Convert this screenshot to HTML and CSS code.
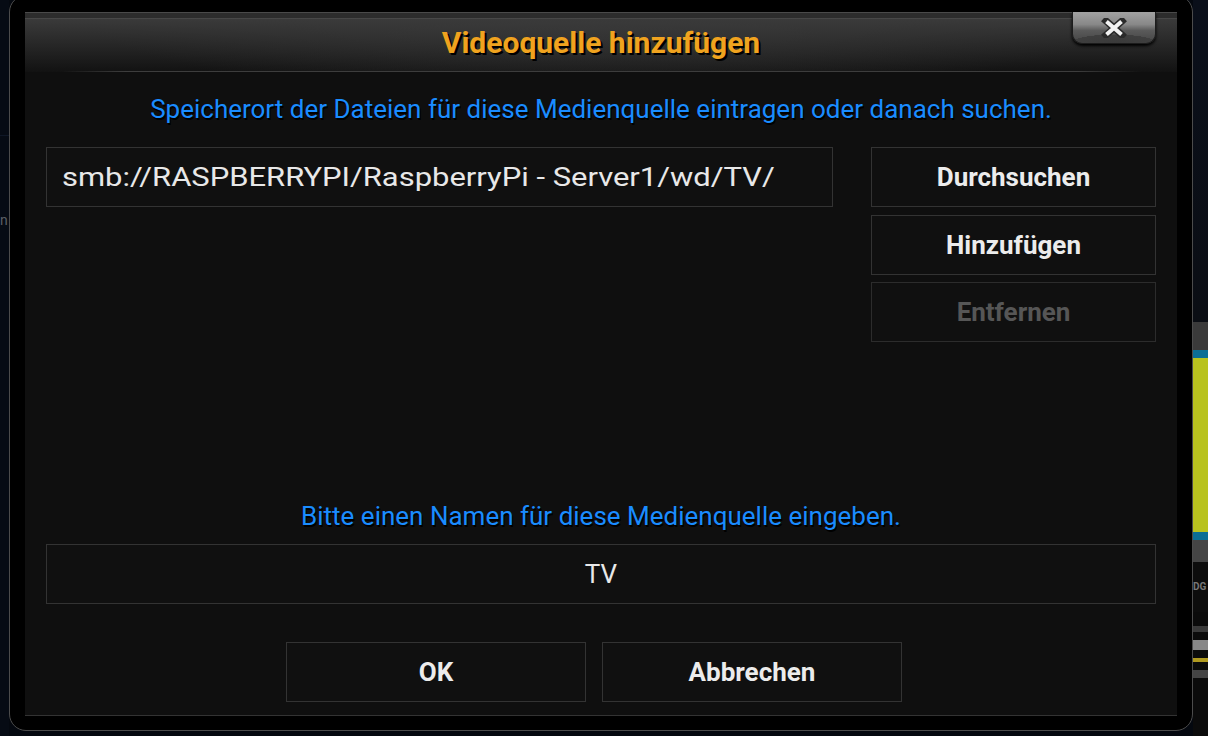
FILE: index.html
```html
<!DOCTYPE html>
<html lang="de">
<head>
<meta charset="utf-8">
<title>Videoquelle hinzufügen</title>
<link rel="stylesheet" href="styles.css">
</head>
<body>
<div class="screen">
  <div class="side side-left">
    <div class="bg-line"></div>
    <span class="bg-text">n</span>
  </div>
  <div class="frame">
    <div class="panel">
      <header class="head">
        <h1 class="title">Videoquelle hinzufügen</h1>
        <div class="head-rule"></div>
        <div class="close" aria-label="Schließen">
          <svg width="26" height="20" viewBox="0 0 26 20">
            <path d="M5 3 L21 17 M21 3 L5 17" stroke="#2a2a2a" stroke-width="7" stroke-linecap="square" fill="none"/>
            <path d="M5.5 3.5 L20.5 16.5 M20.5 3.5 L5.5 16.5" stroke="#f2f2f2" stroke-width="4" stroke-linecap="butt" fill="none"/>
          </svg>
        </div>
      </header>
      <p class="hint hint-top">Speicherort der Dateien für diese Medienquelle eintragen oder danach suchen.</p>
      <div class="row">
        <div class="field field-path"><span class="path-text">smb://RASPBERRYPI/RaspberryPi - Server1/wd/TV/</span></div>
        <div class="btn-col">
          <div class="btn">Durchsuchen</div>
          <div class="btn">Hinzufügen</div>
          <div class="btn btn-disabled">Entfernen</div>
        </div>
      </div>
      <p class="hint hint-name">Bitte einen Namen für diese Medienquelle eingeben.</p>
      <div class="field field-name">TV</div>
      <div class="actions">
        <div class="btn btn-action">OK</div>
        <div class="btn btn-action">Abbrechen</div>
      </div>
    </div>
  </div>
  <div class="side side-right">
    <div class="r-dark"></div>
    <div class="r-gray"></div>
    <div class="r-logo"></div>
    <div class="r-gray2"></div>
    <div class="r-text">DG</div>
    <div class="r-stripes">
      <div class="r-s1"></div>
      <div class="r-s2"></div>
      <div class="r-s3"></div>
      <div class="r-s4"></div>
    </div>
  </div>
</div>
</body>
</html>
```
FILE: styles.css
```css
html, body {
  margin: 0;
  padding: 0;
}
body {
  width: 1208px;
  height: 736px;
  overflow: hidden;
  background: #04080f;
  font-family: Roboto, "Noto Sans", "Liberation Sans", sans-serif;
}
.screen {
  display: flex;
  height: 736px;
  overflow: hidden;
}
.side {
  flex: none;
  display: flex;
  flex-direction: column;
}
.side-left {
  width: 9px;
  background: #060b14;
  overflow: hidden;
}
.bg-line {
  height: 135px;
  border-bottom: 1px solid #0f1726;
}
.bg-text {
  margin-top: 76px;
  color: #5a5f66;
  font-size: 14px;
  line-height: 16px;
}
.frame {
  flex: none;
  box-sizing: border-box;
  width: 1184px;
  height: 736px;
  margin-top: -5px;
  padding: 16px 0 0 15px;
  background: #000;
  border: 1px solid #4c4c4c;
  border-radius: 17px;
}
.panel {
  position: relative;
  box-sizing: border-box;
  width: 1152px;
  height: 704px;
  padding: 0 21px;
  background: #0f0f0f;
  border-bottom: 1px solid #333;
  display: flex;
  flex-direction: column;
}
.head {
  height: 60px;
  margin: 0 -21px;
  display: flex;
  flex-direction: column;
  background:
    linear-gradient(180deg, #4a4a4a 0, #4a4a4a 1px, #2c2c2c 1px, #2c2c2c 6px, #555 6px, #3a3a3a 7px, rgba(0,0,0,0) 60px),
    radial-gradient(ellipse 520px 90px at 50% 0, #303030 0%, #1e1e1e 60%, #121212 100%);
}
.title {
  flex: 1;
  margin: 0;
  display: flex;
  align-items: center;
  justify-content: center;
  padding-top: 2px;
  color: #f0a31f;
  font-size: 30px;
  font-weight: 700;
  text-shadow: 2px 2px 0 #000;
}
.head-rule {
  height: 1px;
  margin: 0 36px 0 36px;
  background: linear-gradient(90deg, rgba(70,70,70,0) 0, #3d3d3d 6%, #3d3d3d 94%, rgba(70,70,70,0) 100%);
}
.close {
  position: absolute;
  top: 0;
  left: 1047px;
  box-sizing: border-box;
  width: 84px;
  height: 32px;
  display: flex;
  align-items: center;
  justify-content: center;
  border: 1px solid #1c1c1c;
  border-top: none;
  border-radius: 0 0 10px 10px;
  background:
    radial-gradient(ellipse 70px 14px at 50% 100%, #3a3a3a 0%, #3f3f3f 60%, rgba(0,0,0,0) 61%),
    linear-gradient(180deg, #a2a2a2 0%, #888 40%, #5a5a5a 60%, #444 100%);
  box-shadow: 0 2px 3px #000;
}
.hint {
  margin: 0;
  text-align: center;
  color: #1a8cff;
  font-size: 26px;
  line-height: 30px;
  text-shadow: 1px 2px 0 #000;
}
.hint-top {
  margin-top: 22px;
}
.row {
  display: flex;
  gap: 38px;
  margin-top: 23px;
}
.field {
  box-sizing: border-box;
  height: 60px;
  display: flex;
  align-items: center;
  background: #101010;
  border: 1px solid #333;
  color: #e8e8e8;
  font-size: 26px;
}
.field-path {
  width: 787px;
  padding-left: 15px;
  align-self: flex-start;
}
.path-text {
  display: inline-block;
  white-space: nowrap;
  transform: scaleX(1.19);
  transform-origin: 0 50%;
}
.btn-col {
  flex: 1;
  display: flex;
  flex-direction: column;
  gap: 7.5px;
}
.btn {
  box-sizing: border-box;
  height: 60px;
  display: flex;
  align-items: center;
  justify-content: center;
  background: #101010;
  border: 1px solid #333;
  color: #ececec;
  font-size: 26px;
  font-weight: 700;
}
.btn-disabled {
  color: #565656;
  border-color: #2c2c2c;
}
.hint-name {
  margin-top: 159px;
}
.field-name {
  margin-top: 13px;
  justify-content: center;
}
.actions {
  display: flex;
  gap: 16px;
  margin-top: 38px;
  padding-left: 240px;
}
.btn-action {
  width: 300px;
}
.side-right {
  width: 15px;
  background: #070b14;
}
.r-dark { height: 322px; background: linear-gradient(180deg, #0a0f1a, #0b0e14); }
.r-gray { height: 28px; background: #3a3a3a; }
.r-logo { height: 190px; background: #b8c21e; border-top: 8px solid #0b6e95; border-bottom: 8px solid #0b6e95; box-sizing: border-box; }
.r-gray2 { height: 22px; background: #454545; }
.r-text { height: 50px; color: #777; font-size: 10px; font-weight: 700; line-height: 50px; background: #0d0d0d; }
.r-stripes { flex: 1; display: flex; flex-direction: column; gap: 8px; padding-top: 14px; background: #0b0b0b; }
.r-s1 { height: 6px; background: #3a3a3a; }
.r-s2 { height: 10px; background: #888; }
.r-s3 { height: 4px; background: #b09a20; }
.r-s4 { height: 8px; background: #444; }
```
